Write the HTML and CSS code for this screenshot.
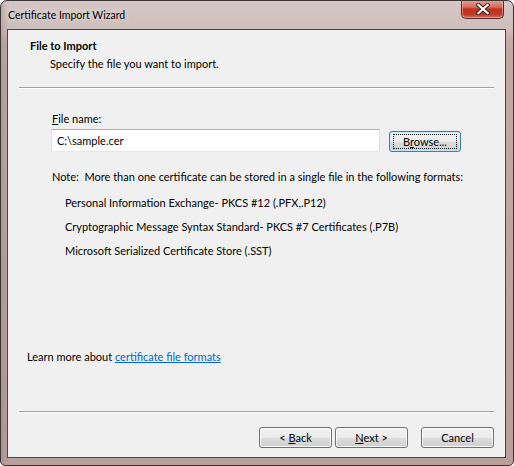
FILE: index.html
```html
<!DOCTYPE html>
<html>
<head>
<meta charset="utf-8">
<link rel="stylesheet" href="styles.css">
</head>
<body>
<div class="window">
  <div class="titlebar">
    <span class="title">Certificate Import Wizard</span>
    <div class="close">
      <svg width="16" height="12" viewBox="0 0 16 12">
        <path d="M3.5 2 L12.5 10 M12.5 2 L3.5 10" stroke="#3a1a1a" stroke-width="4" stroke-linecap="square"/>
        <path d="M3.5 2 L12.5 10 M12.5 2 L3.5 10" stroke="#ffffff" stroke-width="2.2" stroke-linecap="square"/>
      </svg>
    </div>
  </div>
  <div class="client">
    <div class="header">
      <div class="h-title">File to Import</div>
      <div class="h-sub">Specify the file you want to import.</div>
    </div>
    <div class="sep"></div>
    <div class="body">
      <div class="field-label"><u>F</u>ile name:</div>
      <div class="file-row">
        <div class="input">C:\sample.cer</div>
        <div class="btn btn-focus"><span class="focus-rect">B<u>r</u>owse...</span></div>
      </div>
      <div class="note">Note:&nbsp; More than one certificate can be stored in a single file in the following formats:</div>
      <div class="formats">
        <div class="fmt">Personal Information Exchange- PKCS #12 (.PFX,.P12)</div>
        <div class="fmt">Cryptographic Message Syntax Standard- PKCS #7 Certificates (.P7B)</div>
        <div class="fmt">Microsoft Serialized Certificate Store (.SST)</div>
      </div>
      <div class="learn">Learn more about <a class="link" href="#">certificate file formats</a></div>
    </div>
    <div class="sep"></div>
    <div class="footer">
      <div class="btn btn-back"><span>&lt; <u>B</u>ack</span></div>
      <div class="btn btn-next"><span><u>N</u>ext &gt;</span></div>
      <div class="btn btn-cancel"><span>Cancel</span></div>
    </div>
  </div>
</div>
</body>
</html>
```

FILE: styles.css
```css
html, body {
  margin: 0;
  padding: 0;
}
body {
  width: 514px;
  height: 466px;
  overflow: hidden;
  font-family: Lato, "Noto Sans", sans-serif;
  font-size: 11px;
  color: #000;
}
.window {
  box-sizing: border-box;
  width: 514px;
  height: 466px;
  display: flex;
  flex-direction: column;
  border: 1px solid #3d3535;
  border-radius: 7px 7px 5px 5px;
  background:
    linear-gradient(90deg, rgba(120,110,115,0.25) 0px, rgba(255,255,255,0) 8px),
    linear-gradient(180deg, #d6c8c7 0px, #cdbdbb 28px, #c2aaa5 40px, #b99f99 100%);
  overflow: hidden;
}
.titlebar {
  height: 28px;
  display: flex;
  align-items: flex-start;
  position: relative;
  flex: none;
}
.title {
  padding-left: 7px;
  padding-top: 6px;
  line-height: 16px;
  font-size: 10.5px;
  color: #000;
  text-shadow: 0 0 6px rgba(255,255,255,0.8);
}
.close {
  position: absolute;
  right: 9px;
  top: -1px;
  width: 43px;
  height: 19px;
  box-sizing: border-box;
  border: 1px solid #4e3030;
  border-top: none;
  border-radius: 0 0 5px 5px;
  background: linear-gradient(180deg, #e6a398 0%, #d46a5a 40%, #c0331f 50%, #bf3a26 80%, #d9735f 100%);
  box-shadow: inset 0 0 0 1px rgba(255,200,190,0.45);
  display: flex;
  align-items: center;
  justify-content: center;
}
.client {
  flex: 1;
  margin: 0 7px 7px 6px;
  border: 1px solid #4a4444;
  background: #f0f0f0;
  display: flex;
  flex-direction: column;
}
.header {
  padding: 8px 0 15px 22px;
  flex: none;
}
.h-title {
  font-weight: bold;
  line-height: 16px;
}
.h-sub {
  line-height: 16px;
  margin-top: 2px;
  padding-left: 20px;
}
.sep {
  flex: none;
  height: 1px;
  margin: 0 11px;
  background: #a0a0a0;
  border-bottom: 1px solid #ffffff;
}
.body {
  flex: 1;
  display: flex;
  flex-direction: column;
  padding: 22px 0 0 43px;
}
.field-label {
  line-height: 16px;
  padding-left: 1px;
}
.file-row {
  display: flex;
  align-items: flex-start;
  margin-top: 2px;
}
.input {
  box-sizing: border-box;
  width: 329px;
  height: 23px;
  border: 1px solid #abadb3;
  border-color: #abadb3 #dbdfe6 #e3e9ef #e2e3ea;
  background: #fff;
  padding-left: 5px;
  line-height: 21px;
}
.btn {
  box-sizing: border-box;
  width: 73px;
  height: 21px;
  border: 1px solid #707070;
  border-radius: 3px;
  background: linear-gradient(180deg, #f2f2f2 0%, #ebebeb 50%, #dddddd 51%, #cfcfcf 100%);
  box-shadow: inset 0 0 0 1px rgba(255,255,255,0.8);
  display: flex;
  align-items: center;
  justify-content: center;
  line-height: 16px;
}
.btn-focus {
  margin-top: 2px;
  margin-left: 9px;
  width: 72px;
  border-color: #3c7fb1;
  box-shadow: inset 0 0 0 1px rgba(190,230,253,0.9);
}
.focus-rect {
  box-sizing: border-box;
  width: 64px;
  height: 15px;
  border: 1px dotted #000;
  text-align: center;
  line-height: 13px;
}
.note {
  margin-top: 17px;
  line-height: 16px;
  padding-left: 1px;
}
.formats {
  padding-left: 14px;
  margin-top: 10px;
  display: flex;
  flex-direction: column;
  gap: 8px;
}
.fmt {
  line-height: 16px;
}
.learn {
  margin-top: auto;
  margin-left: -24px;
  margin-bottom: 46px;
  line-height: 16px;
}
.link {
  color: #0066cc;
  text-decoration: underline;
}
.footer {
  flex: none;
  display: flex;
  justify-content: flex-end;
  padding: 14px 11px 9px 0;
}
.btn-back {
  margin-right: 3px;
}
.btn-next {
  margin-right: 13px;
}
```
